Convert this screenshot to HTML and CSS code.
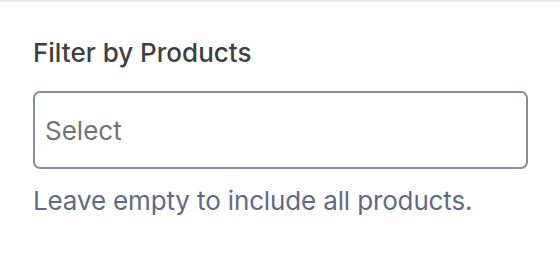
FILE: index.html
```html
<!DOCTYPE html>
<html>
<head>
<meta charset="utf-8">
<link rel="stylesheet" href="styles.css">
</head>
<body>
<div class="panel">
  <label class="label" for="products">Filter by Products</label>
  <div class="select" id="products">
    <span class="placeholder">Select</span>
  </div>
  <p class="help">Leave empty to include all products.</p>
</div>
</body>
</html>
```
FILE: styles.css
```css
html, body {
  margin: 0;
  padding: 0;
  background: #ffffff;
}
body {
  font-family: Inter, "Noto Sans", sans-serif;
  width: 560px;
  height: 254px;
  overflow: hidden;
}
.panel {
  border-top: 2px solid #e8e8ec;
  padding: 35px 33px 0 33px;
  display: flex;
  flex-direction: column;
}
.label {
  font-size: 26px;
  font-weight: 500;
  color: #3f3f3f;
  line-height: 32px;
  margin-bottom: 22px;
}
.select {
  width: 495px;
  height: 78px;
  box-sizing: border-box;
  border: 2px solid #858f9b;
  border-radius: 7px;
  display: flex;
  align-items: center;
  padding-left: 10px;
}
.placeholder {
  font-size: 26px;
  color: #737373;
}
.help {
  margin: 16px 0 0 0;
  font-size: 26px;
  letter-spacing: -0.14px;
  line-height: 32px;
  color: #5f6b86;
}
```
